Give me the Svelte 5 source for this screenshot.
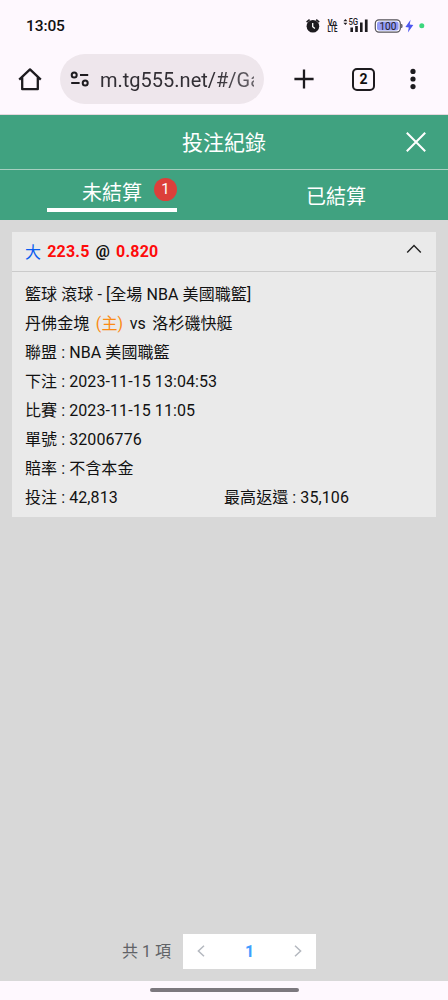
<script lang="ts">
    interface Tab {
        label: string;
        count: number;
    }

    const tabs: Tab[] = [
        { label: "未結算", count: 1 },
        { label: "已結算", count: 0 },
    ];
    const details = [
        { name: "聯盟", value: "NBA 美國職籃" },
        { name: "下注", value: "2023-11-15 13:04:53" },
        { name: "比賽", value: "2023-11-15 11:05" },
        { name: "單號", value: "32006776" },
        { name: "賠率", value: "不含本金" },
    ];

    let active = $state(0);
    let open = $state(true);
</script>

<div class="screen">
    <div class="status">
        <span class="time">13:05</span>
        <svg class="status-icons" width="122" height="20" viewBox="304 16 122 20">
            <circle cx="312.9" cy="26.3" r="6.3" fill="#1d1b1f" />
            <path d="M306.6 22.2l3-2.6M316.2 19.6l3 2.6" stroke="#1d1b1f" stroke-width="1.6" />
            <path d="M312.7 23v3.7l2.2 1.7" fill="none" stroke="#fff" stroke-width="1.3" />
            <text x="327.8" y="25.6" font-size="8.2" font-weight="700" textLength="8.8" lengthAdjust="spacingAndGlyphs">Vo</text>
            <text x="327.6" y="32.2" font-size="8.2" font-weight="700" textLength="9.8" lengthAdjust="spacingAndGlyphs">LTE</text>
            <path d="M343.4 21.2l2-2.3 2 2.3zM343.4 22.8l2 2.3 2-2.3z" fill="#1d1b1f" />
            <text x="348.4" y="25" font-size="8.4" font-weight="500" textLength="9.8" lengthAdjust="spacingAndGlyphs">5G</text>
            <path d="M350.4 27.6h2.6v4.4h-2.6zM355.2 26h2.6v6h-2.6zM360 22.6h2.6v9.4h-2.6zM364.9 19.6h2.7v12.4h-2.7z" fill="#1d1b1f" />
            <rect x="375.3" y="19.9" width="25" height="12.2" rx="3.6" fill="#fff" stroke="#55525a" stroke-width="1.2" />
            <rect x="377" y="21.5" width="21.6" height="9" rx="2.2" fill="#949bf7" />
            <path d="M401.6 24q1.3 2 0 4z" fill="#55525a" stroke="#55525a" stroke-width=".7" />
            <text x="379.4" y="29.6" font-size="10.2" textLength="17" lengthAdjust="spacingAndGlyphs">100</text>
            <path d="M410.6 19.7l-5.2 7.2 3.4.5-.9 5 5.4-7.4-3.6-.4z" fill="#4c57f0" />
            <circle cx="421.8" cy="25.8" r="2.5" fill="#3cd77d" />
        </svg>
    </div>

    <div class="browser">
        <svg class="home" width="24" height="24" viewBox="0 0 24 24">
            <path d="M1.2 12.6L12 2.4l10.8 10.2M4.2 10.4v11.8h15.6V10.4" />
        </svg>
        <div class="address">
            <svg width="20" height="16" viewBox="0 0 20 16">
                <circle cx="4.2" cy="4" r="2.5" />
                <path d="M10 4h8.2M1.2 12h8.4" />
                <circle cx="15.2" cy="12" r="2.5" />
            </svg>
            <span class="url">m.tg555.net/#/Ga</span>
        </div>
        <svg class="plus" width="20" height="20" viewBox="0 0 20 20">
            <path d="M10 .4v19.2M.4 10h19.2" />
        </svg>
        <div class="count">2</div>
        <svg class="more" width="6" height="22" viewBox="0 0 6 22">
            <circle cx="3" cy="3.4" r="2.6" />
            <circle cx="3" cy="11" r="2.6" />
            <circle cx="3" cy="18.6" r="2.6" />
        </svg>
    </div>

    <header>
        <h1>投注紀錄</h1>
        <button class="close" aria-label="close">
            <svg width="20" height="20" viewBox="0 0 20 20">
                <path d="M.8.8l18.4 18.4M19.2.8L.8 19.2" />
            </svg>
        </button>
    </header>

    <nav>
        {#each tabs as tab, i}
            <button class="tab" class:active={active === i} onclick={() => (active = i)}>
                <span class="tab-label">
                    {tab.label}
                    {#if tab.count}
                        <span class="badge">{tab.count}</span>
                    {/if}
                </span>
            </button>
        {/each}
    </nav>

    <main>
        <section class="card">
            <button class="card-head" onclick={() => (open = !open)}>
                <span class="pick">大</span>
                <b class="red">223.5</b>
                <b>@</b>
                <b class="red">0.820</b>
                <svg class:closed={!open} width="16" height="10" viewBox="0 0 16 10">
                    <path d="M1.2 8.6L8 1.6l6.8 7" />
                </svg>
            </button>
            {#if open}
                <div class="card-body">
                    <div class="row">籃球 滾球 - [全場 NBA 美國職籃]</div>
                    <div class="row teams">
                        <span>丹佛金塊</span>
                        <span class="host">(主)</span>
                        <span>vs</span>
                        <span>洛杉磯快艇</span>
                    </div>
                    {#each details as item}
                        <div class="row">{item.name} : {item.value}</div>
                    {/each}
                    <div class="row amounts">
                        <span>投注 : 42,813</span>
                        <span>最高返還 : 35,106</span>
                    </div>
                </div>
            {/if}
        </section>

        <div class="pagination">
            <span class="total">共 1 項</span>
            <div class="pager">
                <svg width="8" height="12" viewBox="0 0 8 12"><path d="M7 .8L1.4 6 7 11.2" /></svg>
                <span class="page">1</span>
                <svg width="8" height="12" viewBox="0 0 8 12"><path d="M1 .8L6.6 6 1 11.2" /></svg>
            </div>
        </div>
    </main>

    <div class="gesture"><i></i></div>
</div>

<style>
    .screen {
        width: 448px;
        height: 1000px;
        display: flex;
        flex-direction: column;
        overflow: hidden;
        background: #fef8fe;
        color: #111;
        font-family: Roboto, "Noto Sans CJK TC", sans-serif;
    }
    button {
        border: 0;
        padding: 0;
        background: none;
        color: inherit;
        font: inherit;
    }
    svg {
        display: block;
        flex: none;
        fill: none;
    }
    .status {
        height: 52px;
        box-sizing: border-box;
        padding: 0 22px 0 26px;
        display: flex;
        align-items: center;
        justify-content: space-between;
    }
    .time {
        font-size: 15.5px;
        font-weight: 500;
        letter-spacing: -0.1px;
    }
    .status-icons text {
        fill: #1d1b1f;
    }
    .browser {
        height: 63px;
        box-sizing: border-box;
        padding: 0 32px 8px 18px;
        display: flex;
        align-items: center;
        border-bottom: 1px solid #e5d8de;
    }
    .home,
    .plus {
        stroke: #1d1b1f;
        stroke-width: 2.3;
        stroke-linejoin: round;
    }
    .address {
        width: 204px;
        height: 50px;
        flex: none;
        box-sizing: border-box;
        margin: 0 30px 0 18px;
        padding: 0 10px;
        border-radius: 25px;
        display: flex;
        align-items: center;
        gap: 10px;
        background: #eee6ec;
    }
    .address svg {
        stroke: #1d1b1f;
        stroke-width: 2;
    }
    .url {
        width: 154px;
        overflow: hidden;
        white-space: nowrap;
        font-size: 20px;
        line-height: 26px;
        padding-top: 1px;
        color: #322f35;
        mask-image: linear-gradient(to right, #000 75%, rgba(0, 0, 0, 0.7));
    }
    .count {
        width: 23px;
        height: 23px;
        flex: none;
        box-sizing: border-box;
        margin: 0 35px 0 38px;
        border: 2px solid #1d1b1f;
        border-radius: 5px;
        font-size: 14px;
        font-weight: 700;
        line-height: 19px;
        text-align: center;
    }
    .more {
        fill: #1d1b1f;
    }
    header {
        height: 55px;
        box-sizing: border-box;
        flex: none;
        display: grid;
        grid-template-columns: 1fr auto 1fr;
        align-items: center;
        padding: 0 22px;
        background: #40a280;
        border-bottom: 1px solid #a6cfc0;
        color: #fff;
    }
    h1 {
        grid-column: 2;
        margin: 0;
        font-size: 21px;
        font-weight: 400;
        line-height: 52px;
        padding-top: 2px;
    }
    .close {
        justify-self: end;
    }
    .close svg {
        stroke: #fff;
        stroke-width: 2;
    }
    nav {
        height: 50px;
        flex: none;
        display: flex;
        background: #40a280;
        color: #fff;
        font-size: 20px;
    }
    .tab {
        flex: 1;
        display: flex;
        justify-content: center;
        align-items: flex-start;
    }
    .tab-label {
        position: relative;
        width: 130px;
        height: 42px;
        box-sizing: border-box;
        line-height: 38px;
        padding-top: 8px;
    }
    .active .tab-label {
        padding-top: 4px;
        border-bottom: 4px solid #fff;
    }
    .badge {
        position: absolute;
        top: 8px;
        right: 0;
        width: 23px;
        height: 23px;
        border-radius: 50%;
        background: #dc3f3a;
        font-size: 15px;
        line-height: 23px;
    }
    main {
        flex: 1;
        display: flex;
        flex-direction: column;
        justify-content: space-between;
        padding: 12px;
        background: #d8d8d8;
    }
    .card {
        background: #eaeaea;
        font-size: 16px;
        letter-spacing: 0.08px;
    }
    .card-head {
        width: 100%;
        height: 40px;
        box-sizing: border-box;
        padding: 0 14px 0 13px;
        display: flex;
        align-items: center;
        gap: 6px;
        border-bottom: 1px solid #cbcbcb;
        letter-spacing: 0.2px;
    }
    .pick {
        margin-top: -2px;
        color: #095cf0;
    }
    .red {
        color: #fe0b0b;
    }
    .card-head svg {
        margin: -6px 0 0 auto;
        stroke: #222;
        stroke-width: 1.4;
    }
    .closed {
        transform: rotate(180deg);
    }
    .card-body {
        padding: 8px 13px 5px;
    }
    .row {
        height: 29px;
        line-height: 29px;
        white-space: nowrap;
    }
    .teams {
        display: flex;
        gap: 6.5px;
    }
    .host {
        color: #fb8b14;
    }
    .amounts {
        display: grid;
        grid-template-columns: 1fr 1fr;
    }
    .pagination {
        display: flex;
        justify-content: center;
        align-items: center;
        gap: 12px;
        padding-right: 10px;
    }
    .total {
        margin-top: -4px;
        color: #606266;
        font-size: 16px;
    }
    .pager {
        width: 133px;
        height: 35px;
        box-sizing: border-box;
        padding: 0 14px;
        display: flex;
        align-items: center;
        justify-content: space-between;
        background: #fff;
    }
    .pager svg {
        margin-top: -2px;
        stroke: #b4b8bf;
        stroke-width: 1.5;
    }
    .page {
        color: #409eff;
        font-size: 16px;
        font-weight: 700;
    }
    .gesture {
        height: 19px;
        box-sizing: border-box;
        padding-bottom: 2px;
        display: flex;
        justify-content: center;
        align-items: center;
    }
    .gesture i {
        width: 149px;
        height: 4px;
        border-radius: 2px;
        background: #7c787e;
    }
</style>
